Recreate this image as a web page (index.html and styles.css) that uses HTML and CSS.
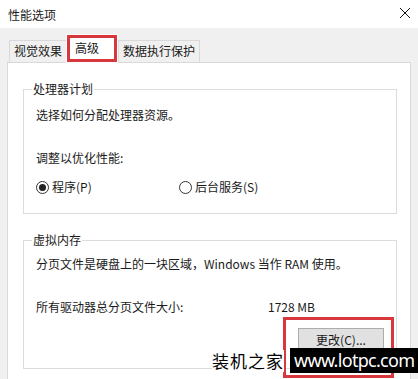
FILE: index.html
```html
<!DOCTYPE html>
<html lang="zh-CN">
<head>
	<meta charset="UTF-8">
	<meta name="viewport" content="width=device-width, initial-scale=1.0">
	<title>性能选项</title>
	<link rel="stylesheet" href="styles.css">
</head>
<body>
	<div class="titlebar">
		<p class="title">性能选项</p>
		<svg class="close" width="12" height="12" viewBox="0 0 12 12">
			<path d="M1 1 L11 11 M11 1 L1 11" stroke="#111" stroke-width="1" fill="none"/>
		</svg>
	</div>
	<div class="dialog-body">
		<div class="tabs">
			<div class="tab">视觉效果</div>
			<div class="tab active">高级<span class="mark"></span></div>
			<div class="tab">数据执行保护</div>
		</div>
		<div class="panel">
			<fieldset class="group">
				<legend>处理器计划</legend>
				<p class="line first">选择如何分配处理器资源。</p>
				<p class="line gap">调整以优化性能:</p>
				<div class="radio-row">
					<div class="option"><span class="radio checked"></span>程序(P)</div>
					<div class="option"><span class="radio"></span>后台服务(S)</div>
				</div>
			</fieldset>
			<fieldset class="group second">
				<legend>虚拟内存</legend>
				<p class="line first-vm">分页文件是硬盘上的一块区域，Windows 当作 RAM 使用。</p>
				<div class="size-row">
					<span>所有驱动器总分页文件大小:</span>
					<span>1728 MB</span>
				</div>
				<div class="btn-row">
					<div class="btn-wrap">
						<button class="btn">更改(C)...</button>
						<span class="mark btn-mark"></span>
					</div>
				</div>
			</fieldset>
		</div>
	</div>
	<div class="watermark">
		<span class="wm-cn">装机之家</span>
		<span class="wm-url">www.lotpc.com</span>
	</div>
</body>
</html>
```

FILE: styles.css
```css
body {
	margin: 0;
	width: 418px;
	height: 379px;
	overflow: hidden;
	position: relative;
	font-family: "Noto Sans CJK SC", "Noto Sans", sans-serif;
	font-size: 12px;
	color: #1a1a1a;
	background-color: #fff;
}

.titlebar {
	height: 28px;
	display: flex;
	justify-content: space-between;
	align-items: center;
	padding: 0 7px 0 8px;
	background-color: #fff;
}

.title {
	margin: 0;
	font-size: 12px;
	line-height: 16px;
	margin-top: 2px;
}

.close {
	margin-top: -2px;
}

.dialog-body {
	background-color: #f0f0f0;
	padding: 0 7px;
	height: 351px;
	overflow: hidden;
}

.tabs {
	height: 34px;
	display: flex;
	align-items: flex-end;
	padding-left: 2px;
}

.tab {
	height: 21px;
	line-height: 20px;
	padding: 0 4px;
	border: 1px solid #d9d9d9;
	border-bottom: none;
	background-color: #f0f0f0;
	margin-right: -1px;
}

.tab.active {
	position: relative;
	z-index: 1;
	height: 28px;
	line-height: 26px;
	padding: 0 18px 0 8px;
	margin-bottom: -1px;
	background-color: #fff;
	border-color: #fff;
	margin-right: 0;
}

.mark {
	position: absolute;
	top: 0;
	left: 0;
	right: 0;
	bottom: 1px;
	border: 3px solid #d8383c;
}

.panel {
	background-color: #fff;
	border: 1px solid #d9d9d9;
	height: 330px;
	padding-top: 18px;
}

.group {
	margin: 0 13px 0 15px;
	padding: 0 12px 18px 12px;
	border: 1px solid #dcdcdc;
	min-width: 0;
}

.group legend {
	padding: 0 1px;
	margin-left: -4px;
	line-height: 16px;
}

.group.second {
	margin-top: 18px;
	padding-bottom: 17px;
}

.line {
	margin: 0;
	line-height: 16px;
}

.line.first {
	margin-top: 10px;
}

.line.gap {
	margin-top: 27px;
}

.line.first-vm {
	margin-top: 8px;
}

.radio-row {
	margin-top: 13px;
	display: grid;
	grid-template-columns: 143px auto;
	line-height: 16px;
}

.option {
	display: flex;
	align-items: center;
	gap: 3px;
}

.radio {
	width: 11px;
	height: 11px;
	border: 1px solid #333;
	border-radius: 50%;
	display: flex;
	align-items: center;
	justify-content: center;
}

.radio.checked::after {
	content: "";
	width: 7px;
	height: 7px;
	border-radius: 50%;
	background-color: #222;
}

.size-row {
	margin-top: 27px;
	display: grid;
	grid-template-columns: 232px auto;
	line-height: 16px;
}

.btn-row {
	margin-top: 13px;
	display: flex;
	justify-content: flex-end;
}

.btn-wrap {
	position: relative;
}

.btn {
	width: 86px;
	height: 23px;
	background-color: #e1e1e1;
	border: 1px solid #adadad;
	font-family: "Noto Sans CJK SC", "Noto Sans", sans-serif;
	font-size: 12px;
	color: #1a1a1a;
	padding: 0;
	display: block;
}

.btn-mark {
	top: -11px;
	left: -15px;
	right: -10px;
	bottom: -27px;
}

.watermark {
	position: absolute;
	left: 212px;
	top: 348px;
	width: 202px;
	display: flex;
	align-items: center;
	gap: 6px;
	white-space: nowrap;
}

.wm-cn {
	font-size: 17px;
	font-weight: 400;
	letter-spacing: 1px;
	color: #000;
	background-color: #fff;
	line-height: 22px;
}

.wm-url {
	background-color: #000;
	color: #fff;
	font-family: "Noto Sans", sans-serif;
	font-size: 18px;
	letter-spacing: -0.7px;
	line-height: 25px;
	padding: 0 4px;
}
```
